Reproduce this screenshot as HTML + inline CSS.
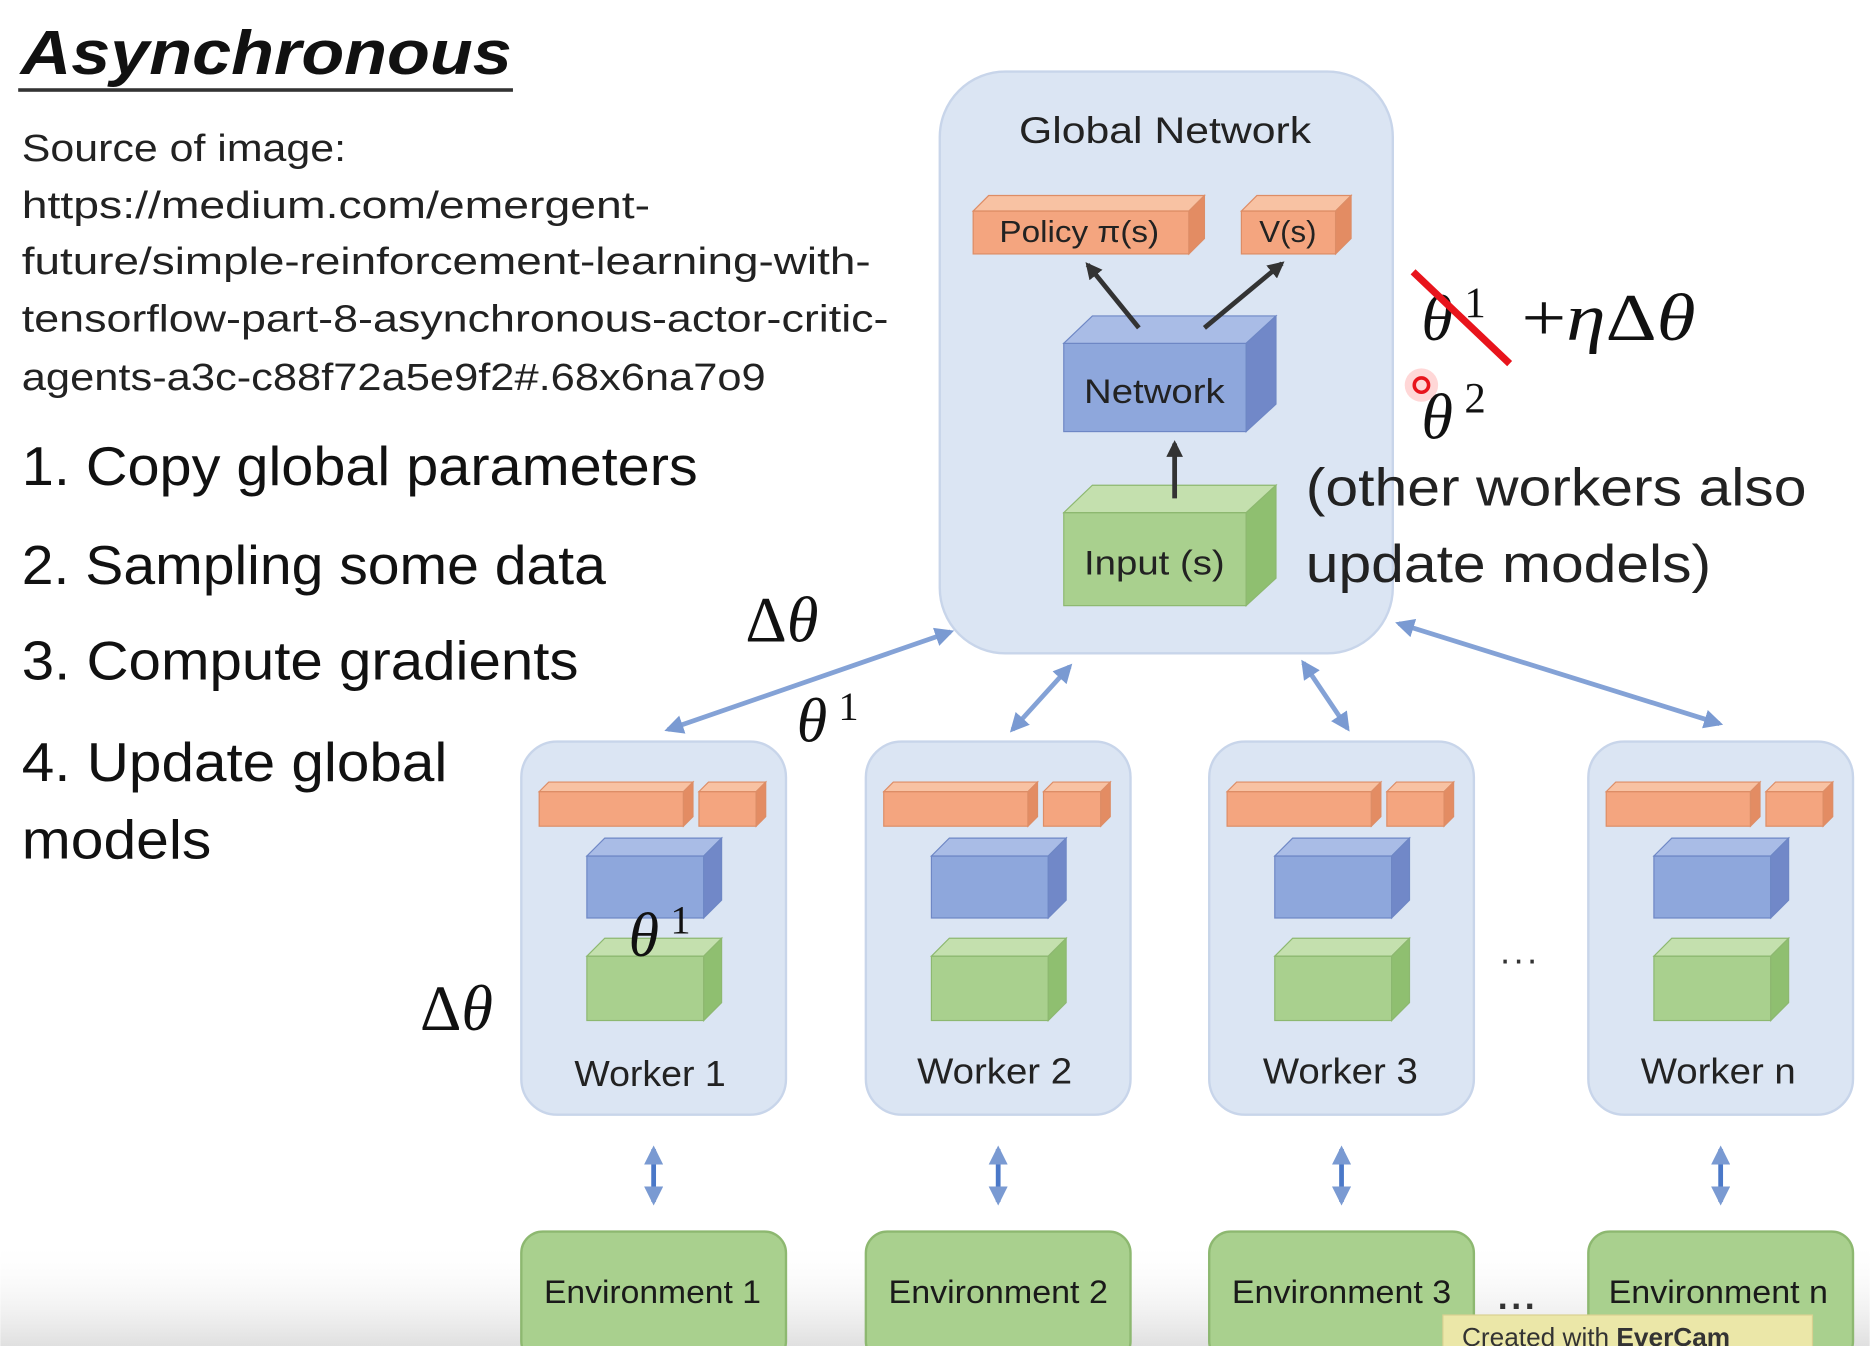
<!DOCTYPE html>
<html><head><meta charset="utf-8"><style>
html,body{margin:0;padding:0;background:#fff;overflow:hidden}
svg{display:block}
.s{font-family:"Liberation Sans",sans-serif}
.m{font-family:"Liberation Serif","DejaVu Serif",serif;font-style:italic}
</style></head><body>
<svg width="1870" height="1346" viewBox="0 0 1568 1129" xmlns="http://www.w3.org/2000/svg">
<defs>
<linearGradient id="bot" x1="0" y1="0" x2="0" y2="1">
<stop offset="0" stop-color="#fff" stop-opacity="0"/>
<stop offset="1" stop-color="#d8d8d8" stop-opacity="0.8"/>
</linearGradient>
<marker id="ab" viewBox="0 0 10 10" refX="8" refY="5" markerWidth="4" markerHeight="4" orient="auto-start-reverse"><path d="M0,0L10,5L0,10z" fill="#7a9ad2"/></marker>
<marker id="ak" viewBox="0 0 10 10" refX="8" refY="5" markerWidth="3.5" markerHeight="3.5" orient="auto"><path d="M0,0L10,5L0,10z" fill="#333"/></marker>
<g id="w">
 <rect x="0" y="622" width="222" height="313" rx="30" fill="#dbe5f3" stroke="#c8d5ea" stroke-width="2"/>
 <rect x="15" y="664" width="121" height="29" fill="#f4a57f" stroke="#dd8d66"/>
 <polygon points="15,664 23,656 144,656 136,664" fill="#f8c2a3" stroke="#dd8d66"/>
 <polygon points="136,664 144,656 144,685 136,693" fill="#e38c63" stroke="#dd8d66"/>
 <rect x="149" y="664" width="48" height="29" fill="#f4a57f" stroke="#dd8d66"/>
 <polygon points="149,664 157,656 205,656 197,664" fill="#f8c2a3" stroke="#dd8d66"/>
 <polygon points="197,664 205,656 205,685 197,693" fill="#e38c63" stroke="#dd8d66"/>
 <rect x="55" y="718" width="98" height="52" fill="#8ea7dc" stroke="#6e87c5"/>
 <polygon points="55,718 70,703 168,703 153,718" fill="#a9bce6" stroke="#6e87c5"/>
 <polygon points="153,718 168,703 168,755 153,770" fill="#7188c8" stroke="#6e87c5"/>
 <rect x="55" y="802" width="98" height="54" fill="#a9d08e" stroke="#8db870"/>
 <polygon points="55,802 70,787 168,787 153,802" fill="#c4e0ae" stroke="#8db870"/>
 <polygon points="153,802 168,787 168,841 153,856" fill="#8fbf70" stroke="#8db870"/>
 <line x1="111" y1="964" x2="111" y2="1008" stroke="#4a78c8" stroke-width="4" marker-start="url(#ab)" marker-end="url(#ab)"/>
 <rect x="0" y="1033" width="222" height="110" rx="18" fill="#a9d08e" stroke="#8db870" stroke-width="2"/>
</g>
</defs>
<rect width="1568" height="1129" fill="#fff"/>
<rect x="0" y="1040" width="1568" height="89" fill="url(#bot)"/>

<!-- left text -->
<text x="17" y="62" class="s" font-size="52" font-weight="bold" font-style="italic" fill="#111" textLength="412" lengthAdjust="spacingAndGlyphs">Asynchronous</text>
<rect x="15" y="74" width="415" height="3" fill="#333"/>
<g class="s" font-size="32" fill="#222">
<text x="18" y="135" textLength="272" lengthAdjust="spacingAndGlyphs">Source of image:</text>
<text x="18" y="183" textLength="527" lengthAdjust="spacingAndGlyphs">https://medium.com/emergent-</text>
<text x="18" y="230" textLength="712" lengthAdjust="spacingAndGlyphs">future/simple-reinforcement-learning-with-</text>
<text x="18" y="278" textLength="727" lengthAdjust="spacingAndGlyphs">tensorflow-part-8-asynchronous-actor-critic-</text>
<text x="18" y="327" textLength="624" lengthAdjust="spacingAndGlyphs">agents-a3c-c88f72a5e9f2#.68x6na7o9</text>
</g>
<g class="s" font-size="46" fill="#111">
<text x="18" y="407" textLength="567" lengthAdjust="spacingAndGlyphs">1. Copy global parameters</text>
<text x="18" y="490" textLength="490" lengthAdjust="spacingAndGlyphs">2. Sampling some data</text>
<text x="18" y="570" textLength="467" lengthAdjust="spacingAndGlyphs">3. Compute gradients</text>
<text x="18" y="655" textLength="357" lengthAdjust="spacingAndGlyphs">4. Update global</text>
<text x="18" y="720" textLength="159" lengthAdjust="spacingAndGlyphs">models</text>
</g>

<!-- global network -->
<rect x="788" y="60" width="380" height="488" rx="55" fill="#dbe5f3" stroke="#c8d5ea" stroke-width="2"/>
<text x="977" y="120" class="s" font-size="31" fill="#222" text-anchor="middle" textLength="245" lengthAdjust="spacingAndGlyphs">Global Network</text>
<rect x="816" y="177" width="181" height="36" fill="#f4a57f" stroke="#dd8d66"/>
<polygon points="816,177 829,164 1010,164 997,177" fill="#f8c2a3" stroke="#dd8d66"/>
<polygon points="997,177 1010,164 1010,200 997,213" fill="#e38c63" stroke="#dd8d66"/>
<rect x="1041" y="177" width="79" height="36" fill="#f4a57f" stroke="#dd8d66"/>
<polygon points="1041,177 1054,164 1133,164 1120,177" fill="#f8c2a3" stroke="#dd8d66"/>
<polygon points="1120,177 1133,164 1133,200 1120,213" fill="#e38c63" stroke="#dd8d66"/>
<text x="905" y="203" class="s" font-size="26" fill="#222" text-anchor="middle" textLength="134" lengthAdjust="spacingAndGlyphs">Policy π(s)</text>
<text x="1080" y="203" class="s" font-size="26" fill="#222" text-anchor="middle" textLength="48" lengthAdjust="spacingAndGlyphs">V(s)</text>
<rect x="892" y="288" width="153" height="74" fill="#8ea7dc" stroke="#6e87c5"/>
<polygon points="892,288 916,265 1070,265 1045,288" fill="#a9bce6" stroke="#6e87c5"/>
<polygon points="1045,288 1070,265 1070,339 1045,362" fill="#7188c8" stroke="#6e87c5"/>
<text x="968" y="338" class="s" font-size="29" fill="#222" text-anchor="middle" textLength="118" lengthAdjust="spacingAndGlyphs">Network</text>
<rect x="892" y="430" width="153" height="78" fill="#a9d08e" stroke="#8db870"/>
<polygon points="892,430 916,407 1070,407 1045,430" fill="#c4e0ae" stroke="#8db870"/>
<polygon points="1045,430 1070,407 1070,485 1045,508" fill="#8fbf70" stroke="#8db870"/>
<text x="968" y="482" class="s" font-size="29" fill="#222" text-anchor="middle" textLength="118" lengthAdjust="spacingAndGlyphs">Input (s)</text>
<g stroke="#333" stroke-width="4" fill="none">
<line x1="955" y1="275" x2="912" y2="222" marker-end="url(#ak)"/>
<line x1="1010" y1="275" x2="1075" y2="221" marker-end="url(#ak)"/>
<line x1="985" y1="418" x2="985" y2="372" marker-end="url(#ak)"/>
</g>

<!-- connector arrows -->
<g stroke="#84a2d6" stroke-width="4" fill="none">
<line x1="560" y1="612" x2="797" y2="530" marker-start="url(#ab)" marker-end="url(#ab)"/>
<line x1="849" y1="612" x2="897" y2="559" marker-start="url(#ab)" marker-end="url(#ab)"/>
<line x1="1093" y1="556" x2="1130" y2="611" marker-start="url(#ab)" marker-end="url(#ab)"/>
<line x1="1173" y1="523" x2="1442" y2="607" marker-start="url(#ab)" marker-end="url(#ab)"/>
</g>

<!-- workers -->
<use href="#w" x="437"/>
<use href="#w" x="726"/>
<use href="#w" x="1014"/>
<use href="#w" x="1332"/>
<g class="s" font-size="30" fill="#222" text-anchor="middle">
<text x="545" y="911" textLength="127" lengthAdjust="spacingAndGlyphs">Worker 1</text>
<text x="834" y="909" textLength="130" lengthAdjust="spacingAndGlyphs">Worker 2</text>
<text x="1124" y="909" textLength="130" lengthAdjust="spacingAndGlyphs">Worker 3</text>
<text x="1441" y="909" textLength="130" lengthAdjust="spacingAndGlyphs">Worker n</text>
</g>
<g class="s" font-size="27" fill="#1a1a1a" text-anchor="middle">
<text x="547" y="1093" textLength="182" lengthAdjust="spacingAndGlyphs">Environment 1</text>
<text x="837" y="1093" textLength="184" lengthAdjust="spacingAndGlyphs">Environment 2</text>
<text x="1125" y="1093" textLength="184" lengthAdjust="spacingAndGlyphs">Environment 3</text>
<text x="1441" y="1093" textLength="184" lengthAdjust="spacingAndGlyphs">Environment n</text>
</g>
<text x="1258" y="808" class="s" font-size="30" fill="#333" letter-spacing="3">...</text>
<text x="1256" y="1098" class="s" font-size="30" fill="#333" font-weight="bold" letter-spacing="3">...</text>

<!-- math -->
<g class="m" fill="#111">
<text x="1192" y="285" font-size="54">θ</text>
<text x="1228" y="266" font-size="36" font-style="normal">1</text>
<text x="1276" y="285" font-size="56" textLength="146" lengthAdjust="spacingAndGlyphs"><tspan font-style="normal">+</tspan>η<tspan font-style="normal">Δ</tspan>θ</text>
<text x="1192" y="368" font-size="54">θ</text>
<text x="1228" y="346" font-size="36" font-style="normal">2</text>
<text x="625" y="538" font-size="54"><tspan font-style="normal">Δ</tspan>θ</text>
<text x="668" y="622" font-size="52">θ</text>
<text x="703" y="604" font-size="34" font-style="normal">1</text>
<text x="527" y="802" font-size="52">θ</text>
<text x="562" y="783" font-size="34" font-style="normal">1</text>
<text x="352" y="864" font-size="54"><tspan font-style="normal">Δ</tspan>θ</text>
</g>
<line x1="1185" y1="228" x2="1266" y2="305" stroke="#e8141c" stroke-width="6"/>
<circle cx="1192" cy="323" r="14" fill="#ff6060" opacity="0.25"/>
<circle cx="1192" cy="323" r="6" fill="none" stroke="#e8141c" stroke-width="3"/>
<g class="s" font-size="44" fill="#222">
<text x="1095" y="424" textLength="420" lengthAdjust="spacingAndGlyphs">(other workers also</text>
<text x="1095" y="488" textLength="340" lengthAdjust="spacingAndGlyphs">update models)</text>
</g>

<!-- evercam -->
<rect x="1210" y="1103" width="310" height="30" fill="#ebe7a8" stroke="#d8d090"/>
<text x="1226" y="1129" class="s" font-size="22" fill="#333">Created with <tspan font-weight="bold">EverCam</tspan></text>
</svg>
</body></html>
